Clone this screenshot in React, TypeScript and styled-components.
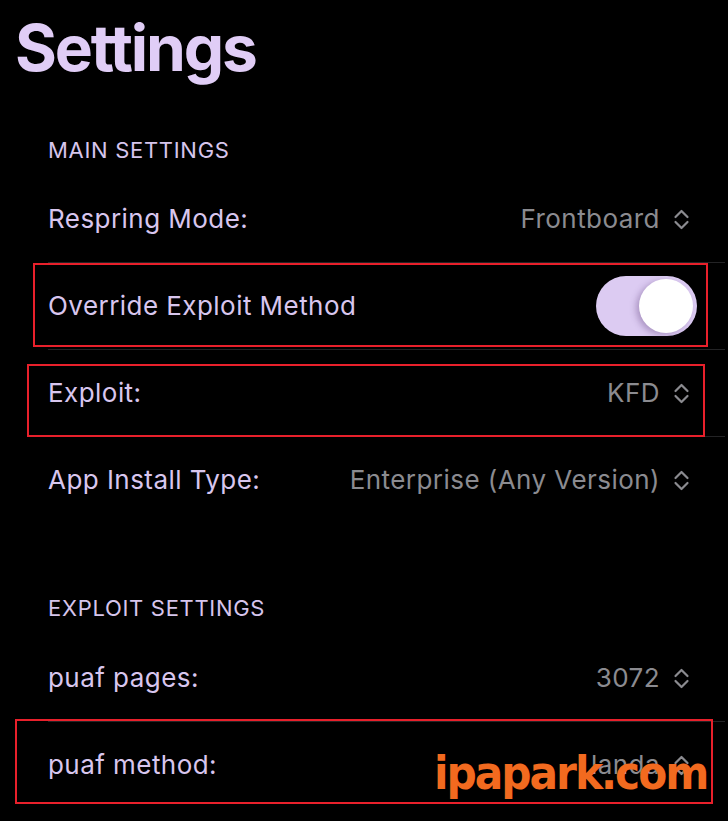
import styled, { createGlobalStyle } from "styled-components";

const GlobalStyle = createGlobalStyle`
  html, body {
    margin: 0;
    padding: 0;
    background: #000;
  }
  body {
    font-family: Inter, "Noto Sans", sans-serif;
    -webkit-font-smoothing: antialiased;
  }
`;

const Page = styled.div`
  position: relative;
  width: 728px;
  height: 821px;
  overflow: hidden;
  background: #000;
`;

const Title = styled.h1`
  margin: 0;
  padding: 16px 0 0 15px;
  font-size: 64px;
  line-height: 64px;
  font-weight: 700;
  letter-spacing: -2.2px;
  color: #e0cdf6;
`;

const Section = styled.section<{ $top: number }>`
  margin-top: ${(p) => p.$top}px;
  padding-left: 48px;
  padding-right: 3px;
`;

const SectionHeader = styled.div<{ $gap: number }>`
  font-size: 22px;
  line-height: 26px;
  letter-spacing: 0.7px;
  color: #d6c5ec;
  margin-bottom: ${(p) => p.$gap}px;
`;

const Row = styled.div<{ $last?: boolean }>`
  position: relative;
  box-sizing: border-box;
  height: 87px;
  display: flex;
  align-items: center;
  justify-content: space-between;
  padding-right: 35px;
  border-bottom: 1px solid ${(p) => (p.$last ? "transparent" : "#232325")};
`;

const Label = styled.span`
  font-size: 26px;
  line-height: 32px;
  letter-spacing: 0.45px;
  color: #d8c6ee;
`;

const Value = styled.span`
  display: flex;
  align-items: center;
  gap: 13px;
  font-size: 26px;
  line-height: 32px;
  letter-spacing: 0.45px;
  color: #8b8b90;
`;

const Toggle = styled.div`
  position: relative;
  width: 101px;
  height: 60px;
  margin-right: -7px;
  border-radius: 30px;
  background: #dccbf2;
`;

const Knob = styled.div`
  position: absolute;
  top: 3px;
  right: 4px;
  width: 54px;
  height: 54px;
  border-radius: 50%;
  background: #fff;
  box-shadow: -3px 2px 6px rgba(80, 50, 110, 0.35);
`;

// red annotation boxes drawn over the rows
const Highlight = styled.div<{ $left: number; $top: number; $width: number; $height: number }>`
  position: absolute;
  left: ${(p) => p.$left}px;
  top: ${(p) => p.$top}px;
  width: ${(p) => p.$width}px;
  height: ${(p) => p.$height}px;
  box-sizing: border-box;
  border: 2px solid #e8202b;
  pointer-events: none;
`;

const Watermark = styled.div`
  position: absolute;
  left: 434px;
  top: 745px;
  font-family: "DejaVu Sans Condensed", "DejaVu Sans", sans-serif;
  font-stretch: condensed;
  font-weight: 700;
  font-size: 47px;
  line-height: 56px;
  letter-spacing: -2px;
  color: #f26a1f;
`;

function UpDown() {
  return (
    <svg width="17" height="23" viewBox="0 0 17 23" fill="none">
      <path
        d="M2.5 9 L8.5 3 L14.5 9 M2.5 14 L8.5 20 L14.5 14"
        stroke="#8b8b90"
        strokeWidth="2.2"
        strokeLinecap="round"
        strokeLinejoin="round"
      />
    </svg>
  );
}

function PickerRow({ label, value, last }: { label: string; value: string; last?: boolean }) {
  return (
    <Row $last={last}>
      <Label>{label}</Label>
      <Value>
        {value}
        <UpDown />
      </Value>
    </Row>
  );
}

export default function App() {
  return (
    <>
      <GlobalStyle />
      <Page>
        <Title>Settings</Title>
        <Section $top={57}>
          <SectionHeader $gap={13}>MAIN SETTINGS</SectionHeader>
          <PickerRow label="Respring Mode:" value="Frontboard" />
          <Row>
            <Label>Override Exploit Method</Label>
            <Toggle>
              <Knob />
            </Toggle>
            <Highlight $left={-15} $top={0} $width={675} $height={84} />
          </Row>
          <Row>
            <Label>Exploit:</Label>
            <Value>
              KFD
              <UpDown />
            </Value>
            <Highlight $left={-21} $top={14} $width={678} $height={73} />
          </Row>
          <PickerRow label="App Install Type:" value="Enterprise (Any Version)" last />
        </Section>
        <Section $top={71}>
          <SectionHeader $gap={14}>EXPLOIT SETTINGS</SectionHeader>
          <PickerRow label="puaf pages:" value="3072" />
          <Row $last>
            <Label>puaf method:</Label>
            <Value>
              landa
              <UpDown />
            </Value>
            <Highlight $left={-33} $top={-3} $width={698} $height={85} />
          </Row>
        </Section>
        <Watermark>ipapark.com</Watermark>
      </Page>
    </>
  );
}
